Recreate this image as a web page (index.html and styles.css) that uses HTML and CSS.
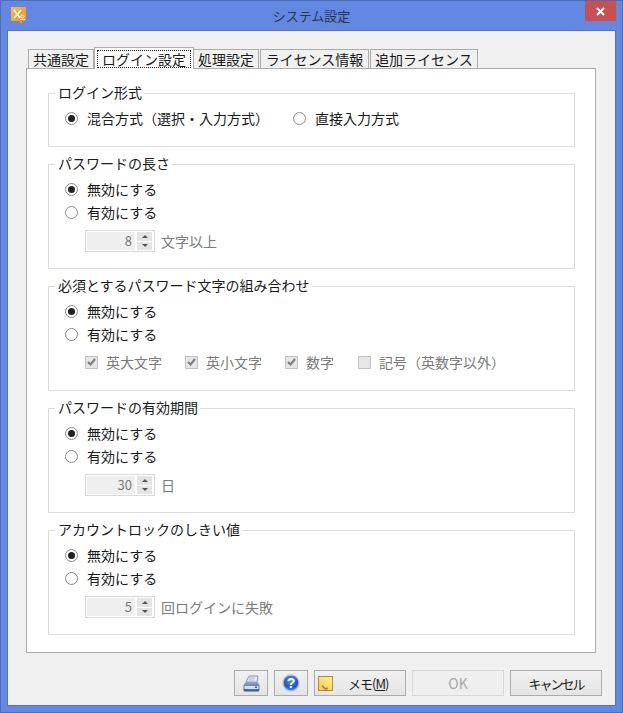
FILE: index.html
```html
<!DOCTYPE html>
<html lang="ja">
<head>
<meta charset="utf-8">
<title>システム設定</title>
<link rel="stylesheet" href="styles.css">
</head>
<body>
<div class="window">
  <header class="titlebar">
    <svg class="app-icon" width="15" height="17" viewBox="0 0 15 17">
      <defs><linearGradient id="og" x1="0" y1="0" x2="1" y2="1"><stop offset="0" stop-color="#f9bb4a"/><stop offset="1" stop-color="#ec8f1e"/></linearGradient></defs>
      <path d="M0 0h14l1 1v12l-1 1h-3v3l-3-3H1l-1-1z" fill="url(#og)"/>
      <path d="M3 3l6 8M10 3L3 11" stroke="#fff" stroke-width="1.5" fill="none"/>
      <circle cx="11.5" cy="9.5" r="1.6" fill="none" stroke="#fff"/>
      <path d="M9 12.5h5" stroke="#fff"/>
    </svg>
    <span class="title">システム設定</span>
    <button class="close" aria-label="閉じる">
      <svg width="9" height="9" viewBox="0 0 9 9"><path d="M1 1l7 7M8 1L1 8" stroke="#fff" stroke-width="2"/></svg>
    </button>
  </header>
  <main class="client">
    <nav class="tabs">
      <span class="tab t1">共通設定</span>
      <span class="tab t2 active"><span class="focus">ログイン設定</span></span>
      <span class="tab t3">処理設定</span>
      <span class="tab t4">ライセンス情報</span>
      <span class="tab t5">追加ライセンス</span>
    </nav>
    <section class="panel">
      <fieldset class="group first">
        <legend>ログイン形式</legend>
        <div class="row inline">
          <label class="opt"><i class="radio on"></i>混合方式（選択・入力方式）</label>
          <label class="opt"><i class="radio"></i>直接入力方式</label>
        </div>
      </fieldset>
      <fieldset class="group">
        <legend>パスワードの長さ</legend>
        <label class="opt"><i class="radio on"></i>無効にする</label>
        <label class="opt"><i class="radio"></i>有効にする</label>
        <div class="sub">
          <span class="spin"><span class="val">8</span><span class="arrows"><b class="up"></b><b class="down"></b></span></span>
          <span class="dim">文字以上</span>
        </div>
      </fieldset>
      <fieldset class="group">
        <legend>必須とするパスワード文字の組み合わせ</legend>
        <label class="opt"><i class="radio on"></i>無効にする</label>
        <label class="opt"><i class="radio"></i>有効にする</label>
        <div class="sub checks">
          <label class="chk w1"><i class="box"><svg width="9" height="8" viewBox="0 0 9 8"><path d="M1 4l2.5 2.5L8 1" stroke="#7d7d7d" stroke-width="2" fill="none"/></svg></i>英大文字</label>
          <label class="chk w1"><i class="box"><svg width="9" height="8" viewBox="0 0 9 8"><path d="M1 4l2.5 2.5L8 1" stroke="#7d7d7d" stroke-width="2" fill="none"/></svg></i>英小文字</label>
          <label class="chk w2"><i class="box"><svg width="9" height="8" viewBox="0 0 9 8"><path d="M1 4l2.5 2.5L8 1" stroke="#7d7d7d" stroke-width="2" fill="none"/></svg></i>数字</label>
          <label class="chk"><i class="box"></i>記号（英数字以外）</label>
        </div>
      </fieldset>
      <fieldset class="group">
        <legend>パスワードの有効期間</legend>
        <label class="opt"><i class="radio on"></i>無効にする</label>
        <label class="opt"><i class="radio"></i>有効にする</label>
        <div class="sub">
          <span class="spin"><span class="val">30</span><span class="arrows"><b class="up"></b><b class="down"></b></span></span>
          <span class="dim">日</span>
        </div>
      </fieldset>
      <fieldset class="group">
        <legend>アカウントロックのしきい値</legend>
        <label class="opt"><i class="radio on"></i>無効にする</label>
        <label class="opt"><i class="radio"></i>有効にする</label>
        <div class="sub">
          <span class="spin"><span class="val">5</span><span class="arrows"><b class="up"></b><b class="down"></b></span></span>
          <span class="dim">回ログインに失敗</span>
        </div>
      </fieldset>
    </section>
    <footer class="actions">
      <button class="btn icon">
        <svg width="17" height="17" viewBox="0 0 17 17">
          <defs><linearGradient id="pr" x1="0" y1="0" x2="0" y2="1"><stop offset="0" stop-color="#8fa6c6"/><stop offset="1" stop-color="#45597a"/></linearGradient></defs>
          <path d="M6 1h9l-1 6H3z" fill="#eef2f7" stroke="#8592a6"/>
          <path d="M6 3h6M5.500 5h6" stroke="#a9b5c5"/>
          <path d="M3 7h11.500l2 3v5l-1 1.500H1l-.5-1.500v-5z" fill="url(#pr)"/>
          <path d="M1.500 11h14v3h-14z" fill="#d7dee8"/>
          <rect x="12" y="11.500" width="2" height="1.500" fill="#45597a"/>
        </svg>
      </button>
      <button class="btn icon">
        <svg width="18" height="18" viewBox="0 0 18 18">
          <defs><radialGradient id="hp" cx=".5" cy=".35" r=".7"><stop offset="0" stop-color="#5f9bee"/><stop offset=".6" stop-color="#1f55c0"/><stop offset="1" stop-color="#52b8e4"/></radialGradient></defs>
          <circle cx="9" cy="9" r="8" fill="url(#hp)" stroke="#b9bec6" stroke-width="1.300"/>
          <text class="q" x="9" y="14" text-anchor="middle">?</text>
        </svg>
      </button>
      <button class="btn memo">
        <svg width="15" height="15" viewBox="0 0 15 15">
          <defs><linearGradient id="mm" x1="1" y1="0" x2="0" y2="1"><stop offset="0" stop-color="#fdf0a4"/><stop offset="1" stop-color="#f7c93f"/></linearGradient></defs>
          <rect x=".5" y=".5" width="14" height="14" fill="url(#mm)" stroke="#b08a3e"/>
          <path d="M4 9.500l3.500 3.500 2.500-1" stroke="#b07a26" stroke-width="1.600" fill="none"/>
        </svg>
        <span class="memo-label">メモ(<u>M</u>)</span>
      </button>
      <button class="btn wide disabled">OK</button>
      <button class="btn wide"><span class="tight">キャンセル</span></button>
    </footer>
  </main>
</div>
</body>
</html>
```
FILE: styles.css
```css
* { box-sizing: border-box; }
html, body { margin: 0; padding: 0; }
body { background: #6288e2; font-family: "Noto Sans CJK JP", "Liberation Sans", sans-serif; font-size: 14px; color: #1a1a1a; }
.window { width: 623px; height: 713px; border: 1px solid #4d6db5; background: #6288e2; display: flex; flex-direction: column; }
.titlebar { height: 29px; flex: none; display: flex; align-items: flex-start; position: relative; }
.app-icon { margin: 6px 0 0 10px; }
.title { position: absolute; left: 0; right: 0; top: 5px; text-align: center; color: #27354f; font-size: 13px; line-height: 20px; }
.close { position: absolute; right: 6px; top: 0; width: 31px; height: 20px; border: 0; padding: 0; background: #c75050; display: flex; align-items: center; justify-content: center; }
.client { flex: 1; margin: 0 6px 6px; background: #f0f0f0; border: 1px solid #5173bd; display: flex; flex-direction: column; padding: 16px 0 0 18px; }
.tabs { display: flex; height: 21px; flex: none; align-items: flex-end; padding-left: 2px; position: relative; z-index: 1; }
.tab { height: 19px; border: 1px solid #acacac; border-bottom: 0; background: #f0f0f0; display: flex; align-items: center; justify-content: center; line-height: 1; margin-right: 1px; white-space: nowrap; }
.t1 { width: 66px; }
.t3 { width: 66px; }
.t4 { width: 109px; }
.t5 { width: 108px; margin-right: 0; }
.tab.active { height: 22px; background: #fff; margin: 0 -1px -1px -1px; width: 100px; }
.focus { border: 1px dotted #222; height: 18px; width: 94px; display: flex; align-items: center; justify-content: center; }
.panel { width: 570px; height: 585px; flex: none; background: #fff; border: 1px solid #acacac; padding: 16px 20px 0 21px; display: flex; flex-direction: column; gap: 9px; }
.group { margin: 0; padding: 6px 0 0 16px; height: 113px; border: 1px solid #dcdcdc; min-width: 0; flex: none; width: 527px; }
.group.first { height: 62px; }
legend { padding: 0 2px 0 3px; margin-left: -10px; font-size: 14px; line-height: 14px; height: 16px; }
.opt { display: flex; align-items: center; height: 23px; line-height: 23px; }
.row.inline { display: flex; gap: 24px; }
.radio { width: 13px; height: 13px; border-radius: 50%; border: 1px solid #8a8a8a; background: #fff; margin-right: 9px; flex: none; display: flex; align-items: center; justify-content: center; }
.radio.on::after { content: ""; width: 7px; height: 7px; border-radius: 50%; background: #222; }
.sub { display: flex; align-items: center; margin: 6px 0 0 20px; height: 22px; color: #7b7b7b; }
.spin { width: 70px; height: 22px; background: #fff; border: 1px solid #d9d9d9; display: flex; margin-right: 6px; flex: none; padding: 1px; }
.val { flex: 1; background: #efefef; text-align: right; padding-right: 3px; font-size: 13px; line-height: 18px; color: #777; }
.arrows { width: 15px; margin: 0 1px 0 2px; display: flex; flex-direction: column; gap: 1px; background: #fff; }
.arrows b { flex: 1; background: #e4e4e4; display: flex; align-items: center; justify-content: center; }
.arrows b::after { content: ""; border-left: 3px solid transparent; border-right: 3px solid transparent; }
.up::after { border-bottom: 3px solid #555; }
.down::after { border-top: 3px solid #555; }
.checks { margin-top: 5px; }
.chk { display: flex; align-items: center; line-height: 22px; }
.chk.w1 { width: 100px; }
.chk.w2 { width: 73px; }
.box { width: 13px; height: 13px; border: 1px solid #c2c2c2; background: #e6e6e6; margin-right: 8px; display: flex; align-items: center; justify-content: center; flex: none; }
.actions { flex: 1; display: flex; justify-content: flex-end; gap: 6px; padding: 17px 13px 0 0; align-items: flex-start; }
.btn { height: 26px; border: 1px solid #acacac; background: linear-gradient(#f0f0f0, #e5e5e5); font: inherit; color: #1a1a1a; padding: 0; display: flex; align-items: center; justify-content: center; }
.btn.icon { width: 34px; }
.btn.wide { width: 92px; }
.btn.memo { width: 92px; justify-content: flex-start; padding-left: 3px; }
.memo-label { margin-left: 15px; font-size: 13px; letter-spacing: -1px; }
.tight { font-size: 13px; letter-spacing: -2px; }
.btn.disabled { border-color: #d9d9d9; background: #efefef; color: #a8a8a8; }
.q { font-family: "Liberation Sans", sans-serif; font-weight: 700; font-size: 14px; fill: #fff; }
```
